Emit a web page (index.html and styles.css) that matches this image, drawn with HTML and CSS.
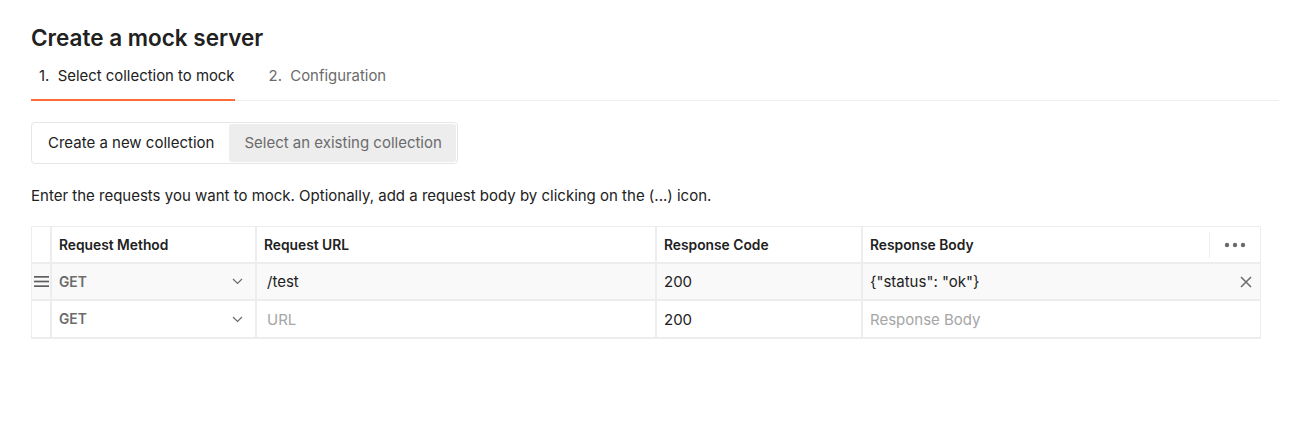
FILE: index.html
```html
<!DOCTYPE html>
<html>
<head>
<meta charset="utf-8">
<link rel="stylesheet" href="styles.css">
</head>
<body>
<div class="page">
  <h1 class="title">Create a mock server</h1>
  <div class="tabs">
    <div class="tab active">1.&nbsp; Select collection to mock</div>
    <div class="tab">2.&nbsp; Configuration</div>
  </div>
  <div class="segmented">
    <div class="seg seg-on">Create a new collection</div>
    <div class="seg seg-off">Select an existing collection</div>
  </div>
  <p class="desc">Enter the requests you want to mock. Optionally, add a request body by clicking on the (...) icon.</p>
  <div class="grid">
    <div class="cell handle"></div>
    <div class="cell head">Request Method</div>
    <div class="cell head">Request URL</div>
    <div class="cell head">Response Code</div>
    <div class="cell head body-head"><span>Response Body</span><span class="more"><svg width="22" height="6" viewBox="0 0 22 6"><circle cx="3" cy="3" r="2.2" fill="#6b6b6b"/><circle cx="11" cy="3" r="2.2" fill="#6b6b6b"/><circle cx="19" cy="3" r="2.2" fill="#6b6b6b"/></svg></span></div>

    <div class="cell handle hov"><svg width="15" height="11" viewBox="0 0 15 11"><rect x="0" y="0" width="15" height="1.7" fill="#5f5f5f"/><rect x="0" y="4.65" width="15" height="1.7" fill="#5f5f5f"/><rect x="0" y="9.3" width="15" height="1.7" fill="#5f5f5f"/></svg></div>
    <div class="cell hov method"><span>GET</span><svg class="chev" width="11" height="7" viewBox="0 0 11 7"><path d="M1 1l4.5 4.5L10 1" fill="none" stroke="#6b6b6b" stroke-width="1.2"/></svg></div>
    <div class="cell hov val url">/test</div>
    <div class="cell hov val">200</div>
    <div class="cell hov val body-val"><span>{"status": "ok"}</span><svg class="close" width="12" height="12" viewBox="0 0 12 12"><path d="M1 1l10 10M11 1L1 11" stroke="#6b6b6b" stroke-width="1.5"/></svg></div>

    <div class="cell handle"></div>
    <div class="cell method"><span>GET</span><svg class="chev" width="11" height="7" viewBox="0 0 11 7"><path d="M1 1l4.5 4.5L10 1" fill="none" stroke="#6b6b6b" stroke-width="1.2"/></svg></div>
    <div class="cell val url ph">URL</div>
    <div class="cell val">200</div>
    <div class="cell val ph">Response Body</div>
  </div>
</div>
</body>
</html>
```

FILE: styles.css
```css
* { box-sizing: border-box; }
html, body { margin: 0; padding: 0; background: #fff; }
body { font-family: Inter, "Noto Sans", sans-serif; color: #212121; }
.page { padding: 24px 16px 0 31px; }
.title { margin: 0; font-size: 22.5px; font-weight: 600; line-height: 28px; }
.tabs { display: flex; gap: 34px; border-bottom: 1px solid #ededed; margin-top: 10px; }
.tab { font-size: 14.9px; line-height: 20px; padding: 4px 0 0 8px; height: 39px; color: #6b6b6b; border-bottom: 2px solid transparent; margin-bottom: -1px; }
.tab.active { color: #212121; border-bottom-color: #ff6c37; }
.tab + .tab { padding-left: 0; }
.segmented { display: inline-flex; margin-top: 21px; border: 1px solid #e6e6e6; border-radius: 4px; padding: 1px; height: 42px; }
.seg { font-size: 15px; line-height: 38px; padding: 0 15px; border-radius: 3px; }
.seg-on { color: #212121; }
.seg-off { background: #ededed; color: #6b6b6b; padding: 0 14px 0 15px; }
.desc { margin: 22px 0 0; font-size: 15px; line-height: 20px; color: #212121; }
.grid { margin-top: 20px; width: 1230px; display: grid; grid-template-columns: 18px 203px 398px 204px 397px; grid-template-rows: 35px 35px 36px; gap: 2px; background: #ededed; border: 1px solid #ededed; border-bottom-width: 2px; }
.cell { background: #fff; display: flex; align-items: center; padding: 0 7px; font-size: 15px; }
.hov { background: #f9f9f9; }
.handle { padding: 0; justify-content: center; }
.head { font-size: 13.8px; font-weight: 600; color: #212121; }
.body-head { justify-content: space-between; padding-right: 0; }
.more { display: flex; align-items: center; justify-content: center; width: 51px; height: 26px; border-left: 1px solid #ededed; }
.method { justify-content: space-between; font-size: 13.8px; font-weight: 600; color: #6b6b6b; padding-right: 12px; }
.url { padding-left: 10px; }
.val { color: #212121; }
.ph { color: #a6a6a6; }
.body-val { justify-content: space-between; padding-right: 8px; }
```
